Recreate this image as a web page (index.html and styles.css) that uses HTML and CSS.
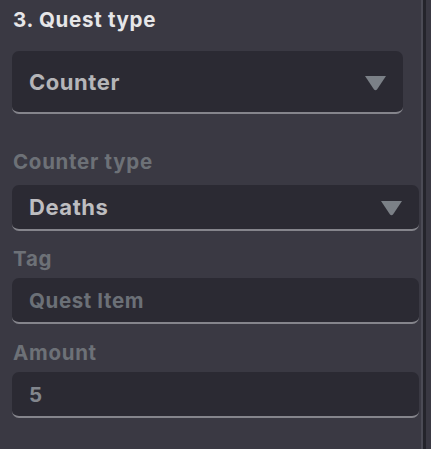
FILE: index.html
```html
<!DOCTYPE html>
<html>
<head>
<meta charset="utf-8">
<link rel="stylesheet" href="styles.css">
</head>
<body>
<div class="panel">
  <div class="content">
    <h2 class="title">3. Quest type</h2>
    <div class="field select primary">
      <span class="value">Counter</span>
      <svg class="arrow" width="23" height="16" viewBox="0 0 23 16"><path d="M1 1 L22 1 L13 14.5 Q11.5 16 10 14.5 Z" fill="#7b8087"/></svg>
    </div>
    <div class="group first">
      <label class="label">Counter type</label>
      <div class="field select">
        <span class="value">Deaths</span>
        <svg class="arrow" width="23" height="16" viewBox="0 0 23 16"><path d="M1 1 L22 1 L13 14.5 Q11.5 16 10 14.5 Z" fill="#7b8087"/></svg>
      </div>
    </div>
    <div class="group">
      <label class="label">Tag</label>
      <div class="field input"><span class="placeholder">Quest Item</span></div>
    </div>
    <div class="group last">
      <label class="label">Amount</label>
      <div class="field input"><span class="number">5</span></div>
    </div>
  </div>
  <div class="edge">
    <div class="edge-light"></div>
    <div class="edge-dark"></div>
    <div class="edge-rest"></div>
  </div>
</div>
</body>
</html>
```

FILE: styles.css
```css
html, body {
  margin: 0;
  padding: 0;
  background: #3a3943;
  height: 449px;
  overflow: hidden;
}
.panel {
  display: flex;
  width: 431px;
  height: 449px;
  font-family: Inter, "Noto Sans", sans-serif;
}
.content {
  flex: 1;
  padding: 7px 2px 0 12px;
  display: flex;
  flex-direction: column;
}
.title {
  margin: 0 0 0 1px;
  font-size: 20.5px;
  line-height: 26px;
  font-weight: 700;
  color: #e6e6e8;
  letter-spacing: 0.7px;
}
.field {
  box-sizing: border-box;
  background: #2b2a33;
  border-radius: 7px;
  border-bottom: 2px solid #85858c;
  display: flex;
  align-items: center;
  padding: 0 17px;
  height: 46px;
}
.select {
  justify-content: space-between;
}
.primary {
  margin-top: 18px;
  margin-right: 16px;
  height: 63px;
}
.value {
  font-size: 22px;
  font-weight: 700;
  letter-spacing: 0.55px;
  color: #bdbdc0;
}
.primary .value {
  color: #b5b5b8;
}
.arrow {
  margin-right: -1px;
  margin-top: 2px;
}
.group {
  display: flex;
  flex-direction: column;
  margin-top: 15px;
}
.group.first {
  margin-top: 35px;
}
.group.last {
  margin-top: 16px;
}
.group.first .label {
  margin-bottom: 10px;
}
.label {
  margin-left: 1px;
  font-size: 20.5px;
  line-height: 26px;
  font-weight: 700;
  letter-spacing: 0.7px;
  color: #6d7177;
  margin-bottom: 6px;
}
.placeholder {
  font-size: 20.5px;
  font-weight: 700;
  letter-spacing: 0.6px;
  color: #6b7077;
}
.number {
  font-size: 20.5px;
  font-weight: 700;
  color: #82868d;
}
.edge {
  display: flex;
  width: 10px;
}
.edge-light {
  width: 2px;
  background: #4b4b55;
}
.edge-dark {
  width: 3px;
  background: #24242b;
}
.edge-rest {
  flex: 1;
  background: #393842;
}
```
